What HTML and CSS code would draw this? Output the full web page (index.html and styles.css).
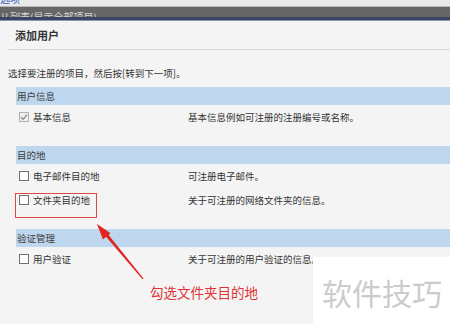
FILE: index.html
```html
<!DOCTYPE html>
<html lang="zh">
<head>
<meta charset="utf-8">
<link rel="stylesheet" href="styles.css">
</head>
<body>
<div class="top-strip"><span class="top-link">选项</span></div>
<div class="dark-bar"><span class="dark-text">从列表(显示全部项目)</span></div>
<div class="navy-bar"></div>
<main class="dialog">
  <h1 class="title">添加用户</h1>
  <p class="intro">选择要注册的项目，然后按[转到下一项]。</p>

  <section class="group">
    <div class="band">用户信息</div>
    <div class="row">
      <span class="item"><span class="box checked"><svg viewBox="0 0 10 10" width="10" height="10"><path d="M2 5.2 L4.2 7.3 L8 2.6" fill="none" stroke="#8a8a8a" stroke-width="1.3"/></svg></span>基本信息</span>
      <span class="desc">基本信息例如可注册的注册编号或名称。</span>
    </div>
  </section>

  <section class="group">
    <div class="band">目的地</div>
    <div class="row">
      <span class="item"><span class="box"></span>电子邮件目的地</span>
      <span class="desc">可注册电子邮件。</span>
    </div>
    <div class="row">
      <span class="item"><span class="box"></span>文件夹目的地</span>
      <span class="desc">关于可注册的网络文件夹的信息。</span>
    </div>
  </section>

  <section class="group">
    <div class="band">验证管理</div>
    <div class="row">
      <span class="item"><span class="box"></span>用户验证</span>
      <span class="desc">关于可注册的用户验证的信息。</span>
    </div>
  </section>
</main>

<div class="red-frame"></div>
<svg class="arrow" width="450" height="324" viewBox="0 0 450 324">
  <polygon points="143.5,278.5 142.5,279.3 103.5,233.8 105.8,231.6" fill="#e5231f"/>
  <polygon points="97,224 110.5,233.2 102.9,239.6" fill="#e5231f"/>
</svg>
<div class="note">勾选文件夹目的地</div>
<div class="watermark">软件技巧</div>
</body>
</html>
```
FILE: styles.css
```css
html, body {
  margin: 0;
  padding: 0;
}
body {
  width: 450px;
  height: 324px;
  overflow: hidden;
  background: #f4f4f4;
  font-family: "Noto Sans CJK SC", "Noto Sans", sans-serif;
  color: #333;
  position: relative;
}
.top-strip {
  height: 6px;
  background: #e8e8e8;
  border-bottom: 1px solid #b8b8b8;
  overflow: hidden;
}
.top-link {
  display: block;
  font-size: 10px;
  line-height: 12px;
  margin-top: -7px;
  color: #3a5fc0;
}
.dark-bar {
  height: 10px;
  background: #666666;
  overflow: hidden;
}
.dark-text {
  display: block;
  padding-top: 4px;
  padding-left: 0;
  font-size: 10px;
  line-height: 12px;
  color: #d8d8d8;
}
.navy-bar {
  height: 3px;
  background: #3b465f;
  border-bottom: 1px solid #8a97b0;
}
.dialog {
  display: block;
}
.title {
  margin: 0 0 0 8px;
  height: 28px;
  padding-left: 7px;
  border-bottom: 1px solid #d9d9d9;
  display: flex;
  align-items: center;
  font-size: 11px;
  font-weight: bold;
  color: #333;
}
.intro {
  margin: 0;
  padding: 16px 0 0 8px;
  height: 21px;
  font-size: 9.5px;
  line-height: 14px;
  color: #333;
}
.group {
  margin-left: 16px;
  margin-bottom: 17px;
}
.band {
  height: 18px;
  background: #bed6ee;
  display: flex;
  align-items: center;
  padding-left: 1px;
  font-size: 9.5px;
  color: #3c3c3c;
}
.row {
  height: 24px;
  display: flex;
  align-items: center;
  font-size: 9.5px;
}
.item {
  width: 169px;
  display: flex;
  align-items: center;
  padding-left: 3px;
}
.box {
  width: 8px;
  height: 8px;
  border: 1px solid #707070;
  background: #ffffff;
  margin-right: 4px;
  display: inline-block;
  position: relative;
}
.box.checked {
  border-color: #b0b0b0;
  background: #f0f0f0;
}
.box.checked svg {
  position: absolute;
  left: -1px;
  top: -1px;
}
.desc {
  color: #333;
}
.red-frame {
  position: absolute;
  left: 15px;
  top: 193px;
  width: 80px;
  height: 23px;
  border: 1px solid #e04848;
}
.arrow {
  position: absolute;
  left: 0;
  top: 0;
}
.note {
  position: absolute;
  left: 150px;
  top: 283px;
  font-size: 13.5px;
  line-height: 18px;
  color: #e03333;
  white-space: nowrap;
}
.watermark {
  position: absolute;
  left: 313px;
  top: 257px;
  width: 137px;
  height: 67px;
  background: #ffffff;
  box-sizing: border-box;
  padding-left: 9px;
  padding-top: 15px;
  font-size: 30px;
  line-height: 40px;
  color: #cccccc;
  white-space: nowrap;
}
```
